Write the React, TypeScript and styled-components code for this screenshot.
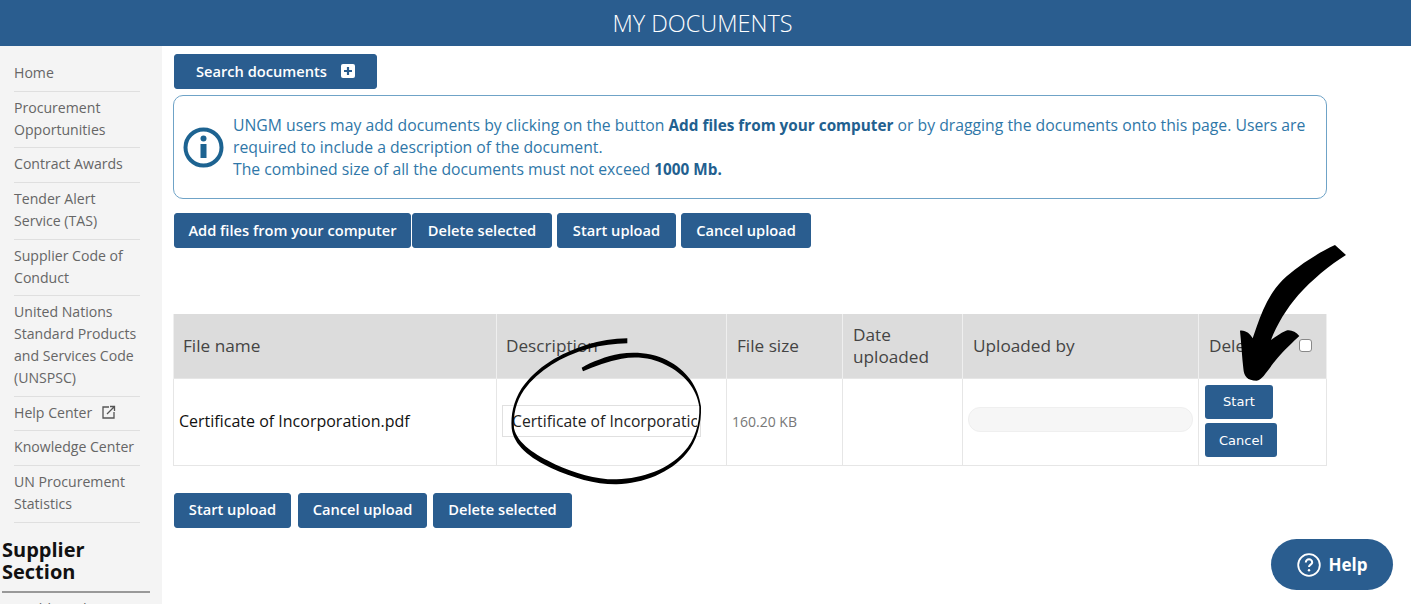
import styled, { createGlobalStyle } from "styled-components";

const GlobalStyle = createGlobalStyle`
  html, body { margin: 0; padding: 0; background: #fff; }
  body { font-family: "Open Sans", "Liberation Sans", sans-serif; overflow: hidden; }
`;

const BLUE = "#2a5d8f";

const Page = styled.div`
  position: relative;
  width: 1411px;
  height: 604px;
  overflow: hidden;
`;

const Header = styled.header`
  height: 46px;
  padding-right: 6px;
  background: ${BLUE};
  color: #fff;
  font-size: 23.5px;
  font-weight: 300;
  line-height: 46px;
  text-align: center;
`;

const Body = styled.div`
  display: flex;
  height: 558px;
`;

const Sidebar = styled.nav`
  flex: 0 0 162px;
  box-sizing: border-box;
  background: #f4f4f4;
  padding: 11px 0 0 0;
  overflow: hidden;
`;

const NavItem = styled.div`
  width: 126px;
  margin-left: 14px;
  padding: 5px 0 7px;
  border-bottom: 1px solid #dfdfdf;
  font-size: 14.1px;
  line-height: 21.8px;
  color: #666;
  display: flex;
  align-items: center;
  gap: 9px;
`;

const SectionTitle = styled.div`
  margin: 16px 12px 0 2px;
  padding-bottom: 8px;
  border-bottom: 2px solid #999;
  font-size: 20px;
  font-weight: 700;
  line-height: 22px;
  color: #111;
`;

const Main = styled.main`
  flex: 1;
  padding: 8px 85px 0 11px;
`;

const Button = styled.button<{ $w: number }>`
  box-sizing: border-box;
  width: ${(p) => p.$w}px;
  height: 35px;
  margin: 0;
  padding: 0 0 2px;
  border: 1px solid ${BLUE};
  border-radius: 3px;
  background: ${BLUE};
  color: #fff;
  font-family: "Open Sans", sans-serif;
  font-size: 14.65px;
  font-weight: 600;
  display: inline-flex;
  align-items: center;
  justify-content: center;
`;

const SearchButton = styled(Button)`
  margin-left: 1px;
  gap: 14px;
`;

const Alert = styled.div`
  box-sizing: border-box;
  height: 104px;
  margin-top: 6px;
  padding: 0 12px 0 9px;
  border: 1px solid #6fa3c7;
  border-radius: 10px;
  display: flex;
  align-items: center;
  gap: 9px;
  color: #2f77a8;
  font-size: 15.75px;
  line-height: 22px;
  b { color: #22608f; font-size: 15.3px; font-weight: 700; }
`;

const AlertText = styled.div`
  margin-top: -1px;
`;

const ButtonRow = styled.div<{ $top: number }>`
  display: flex;
  margin: ${(p) => p.$top}px 0 0 1px;
`;

const Gap = styled.span<{ $w: number }>`
  flex: 0 0 ${(p) => p.$w}px;
`;

const Table = styled.table`
  width: 1153px;
  margin-top: 66px;
  border-collapse: collapse;
  table-layout: fixed;
`;

const Th = styled.th<{ $w: number }>`
  width: ${(p) => p.$w}px;
  height: 64px;
  box-sizing: border-box;
  padding: 0 10px;
  background: #dcdcdc;
  border-left: 1px solid #efefef;
  border-right: 1px solid #efefef;
  color: #444;
  font-size: 17.2px;
  font-weight: 400;
  line-height: 22px;
  text-align: left;
  position: relative;
  &:nth-child(-n + 2) { padding-left: 9px; }
`;

const Td = styled.td`
  height: 87px;
  box-sizing: border-box;
  padding: 0 5px 2px;
  border: 1px solid #e6e6e6;
  font-size: 16px;
  color: #111;
`;

const Check = styled.span`
  position: absolute;
  left: 100px;
  top: 25px;
  box-sizing: border-box;
  width: 13px;
  height: 13px;
  background: #fff;
  border: 1.5px solid #888;
  border-radius: 3px;
`;

const DescInput = styled.div`
  box-sizing: border-box;
  width: 199px;
  height: 32px;
  padding: 0 3px 0 9px;
  border: 1px solid #e0e0e0;
  font-size: 15.7px;
  line-height: 30px;
  color: #222;
`;

const DescValue = styled.div`
  white-space: nowrap;
  overflow: hidden;
`;

const Size = styled.span`
  font-size: 14px;
  color: #777;
`;

const Progress = styled.div`
  height: 23px;
  margin-top: -3px;
  border: 1px solid #efefef;
  border-radius: 12px;
  background: #f6f6f6;
`;

const SmallButton = styled.button<{ $w: number }>`
  display: block;
  box-sizing: border-box;
  width: ${(p) => p.$w}px;
  height: 34px;
  margin: 0 0 0 1px;
  padding: 0;
  border: 0;
  border-radius: 3px;
  background: ${BLUE};
  color: #fff;
  font-family: "DejaVu Sans", sans-serif;
  font-size: 13px;
  & + & { margin-top: 4px; padding-top: 2px; }
`;

const HelpPill = styled.div`
  position: absolute;
  left: 1271px;
  top: 539px;
  width: 122px;
  height: 51px;
  border-radius: 26px;
  background: ${BLUE};
  color: #fff;
  font-size: 17px;
  font-weight: 700;
  display: flex;
  align-items: center;
  justify-content: center;
  gap: 8px;
`;

const Overlay = styled.svg`
  position: absolute;
  left: 0;
  top: 0;
  pointer-events: none;
`;

const navItems = [
  "Home",
  "Procurement Opportunities",
  "Contract Awards",
  "Tender Alert Service (TAS)",
  "Supplier Code of Conduct",
  "United Nations Standard Products and Services Code (UNSPSC)",
];

const App = () => {
  return (
    <Page>
      <GlobalStyle />
      <Header>MY DOCUMENTS</Header>
      <Body>
        <Sidebar>
          {navItems.map((n) => (
            <NavItem key={n}>{n}</NavItem>
          ))}
          <NavItem>
            Help Center
            <svg width="15" height="15" viewBox="0 0 15 15" fill="none" stroke="#555" strokeWidth="1.3">
              <path d="M8 2H2v11h11V7" />
              <path d="M6 9l7-7M9 1.5h4.5V6" />
            </svg>
          </NavItem>
          <NavItem>Knowledge Center</NavItem>
          <NavItem>UN Procurement Statistics</NavItem>
          <SectionTitle>Supplier Section</SectionTitle>
          <NavItem>Dashboard</NavItem>
        </Sidebar>
        <Main>
          <SearchButton $w={203}>
            Search documents
            <svg width="14" height="14" viewBox="0 0 14 14">
              <rect width="14" height="14" rx="2" fill="#fff" />
              <path d="M7 3v8M3 7h8" stroke={BLUE} strokeWidth="2.2" />
            </svg>
          </SearchButton>
          <Alert>
            <svg width="41" height="41" viewBox="0 0 41 41" style={{ flex: "none" }}>
              <circle cx="20.5" cy="20.5" r="18" fill="none" stroke="#1d6391" strokeWidth="4" />
              <circle cx="20.5" cy="11.5" r="3" fill="#1d6391" />
              <rect x="17.5" y="17" width="6" height="14" fill="#1d6391" />
            </svg>
            <AlertText>
              UNGM users may add documents by clicking on the button <b>Add files from your computer</b> or by
              dragging the documents onto this page. Users are required to include a description of the document.
              <br />
              The combined size of all the documents must not exceed <b>1000 Mb.</b>
            </AlertText>
          </Alert>
          <ButtonRow $top={14}>
            <Button $w={237}>Add files from your computer</Button>
            <Gap $w={1} />
            <Button $w={140}>Delete selected</Button>
            <Gap $w={5} />
            <Button $w={119}>Start upload</Button>
            <Gap $w={5} />
            <Button $w={130}>Cancel upload</Button>
          </ButtonRow>
          <Table>
            <thead>
              <tr>
                <Th $w={323}>File name</Th>
                <Th $w={230}>Description</Th>
                <Th $w={116}>File size</Th>
                <Th $w={120}>Date uploaded</Th>
                <Th $w={236}>Uploaded by</Th>
                <Th $w={128}>
                  Delete
                  <Check />
                </Th>
              </tr>
            </thead>
            <tbody>
              <tr>
                <Td>Certificate of Incorporation.pdf</Td>
                <Td>
                  <DescInput>
                    <DescValue>Certificate of Incorporation.pdf</DescValue>
                  </DescInput>
                </Td>
                <Td>
                  <Size>160.20 KB</Size>
                </Td>
                <Td />
                <Td>
                  <Progress />
                </Td>
                <Td>
                  <SmallButton $w={68}>Start</SmallButton>
                  <SmallButton $w={72}>Cancel</SmallButton>
                </Td>
              </tr>
            </tbody>
          </Table>
          <ButtonRow $top={27}>
            <Button $w={117}>Start upload</Button>
            <Gap $w={7} />
            <Button $w={129}>Cancel upload</Button>
            <Gap $w={6} />
            <Button $w={139}>Delete selected</Button>
          </ButtonRow>
        </Main>
      </Body>
      <HelpPill>
        <svg width="24" height="24" viewBox="0 0 24 24" fill="none" stroke="#fff" strokeWidth="1.8">
          <circle cx="12" cy="12" r="10.8" />
          <path d="M8.8 9.4a3.2 3.2 0 0 1 6.4 0c0 2.1-3.2 2.3-3.2 4.5" strokeWidth="2" />
          <circle cx="12" cy="17.2" r="1.2" fill="#fff" stroke="none" />
        </svg>
        Help
      </HelpPill>
      <Overlay width="1411" height="604" viewBox="0 0 1411 604">
        {/* hand drawn circle round the description, coords from a 3x crop */}
        <g transform="translate(480 320) scale(0.3333)">
          <path
            d="M442 55 C400 56 360 62 320 74 C240 100 170 140 125 205 C100 245 92 285 95 325 C100 375 150 415 215 445 C280 475 350 494 410 493 C490 490 570 460 620 400 C650 365 665 310 663 260 C655 200 620 150 560 120 C520 100 470 94 420 101 C380 108 335 125 305 143 L309 154 C345 137 385 124 425 116 C470 108 520 114 558 135 C612 162 650 205 658 260 C660 310 645 360 612 395 C565 448 490 474 410 478 C350 479 285 460 228 434 C165 405 112 370 102 325 C99 285 108 245 132 210 C175 150 245 108 325 86 C365 75 405 71 442 70 Z"
            fill="#000"
          />
        </g>
        {/* arrow */}
        <g transform="translate(1130 230) scale(0.3333)">
          <path
            d="M615 45 C565 68 500 110 458 150 C418 190 398 240 380 290 L368 325 C360 312 348 300 330 302 C334 340 336 380 340 415 C342 440 352 452 380 452 C398 450 412 420 442 385 C465 358 490 335 508 318 C497 305 482 298 468 302 C450 310 437 320 423 330 C440 285 470 235 505 195 C545 150 600 105 648 75 Z"
            fill="#000"
          />
        </g>
      </Overlay>
    </Page>
  );
};

export default App;
